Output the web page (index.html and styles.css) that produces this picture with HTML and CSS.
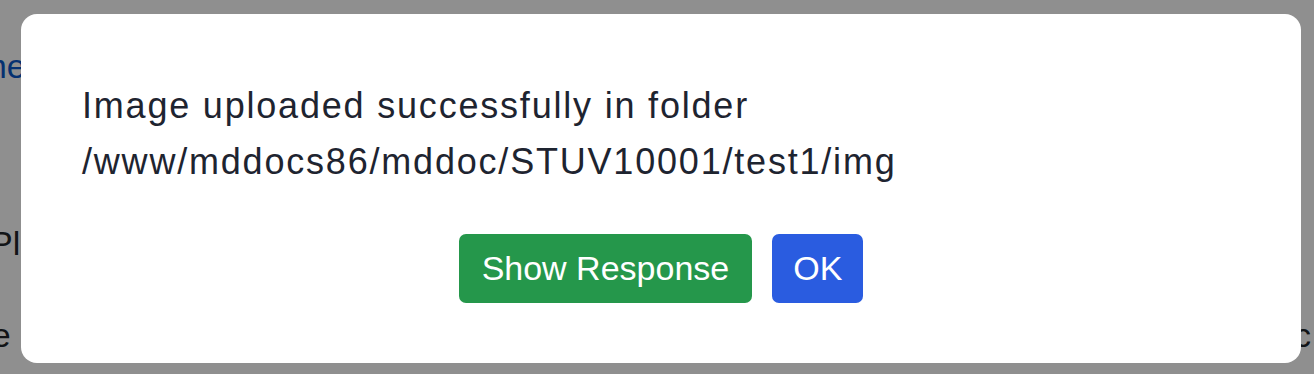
FILE: index.html
```html
<!DOCTYPE html>
<html lang="en">
<head>
    <meta charset="UTF-8">
    <title>Upload Result</title>
    <meta name="viewport" content="width=device-width, initial-scale=1.0">
    <link rel="stylesheet" href="styles.css">
</head>
<body>
<div class="page">
    <div class="page-line page-link">Home</div>
    <div class="page-line page-title">Pl</div>
    <div class="page-row">
        <span class="page-line">Name</span>
        <span class="page-line">Doc</span>
    </div>
</div>

<div class="overlay">
    <div class="modal">
        <p class="modal-text">Image uploaded successfully in folder<br>/www/mddocs86/mddoc/STUV10001/test1/img</p>
        <div class="modal-actions">
            <button class="btn btn-green">Show Response</button>
            <button class="btn btn-blue">OK</button>
        </div>
    </div>
</div>
</body>
</html>
```

FILE: styles.css
```css
body {
    margin: 0;
    background-color: #fff;
    font-family: "Liberation Sans", Arial, sans-serif;
    color: #212529;
    overflow: hidden;
}
.page {
    display: flex;
    flex-direction: column;
    height: 374px;
    font-size: 34px;
}
.page-line {
    line-height: 40px;
}
.page-link {
    color: #0a58ca;
    margin: 46px 0 0 -65px;
}
.page-title {
    margin: 137px 0 0 -10px;
}
.page-row {
    display: flex;
    justify-content: space-between;
    margin: 52px 3px 0 -80px;
}
.overlay {
    position: fixed;
    top: 0;
    left: 0;
    right: 0;
    bottom: 0;
    background: rgba(0, 0, 0, 0.44);
    display: flex;
    padding: 14px 13px 11px 21px;
    box-sizing: border-box;
}
.modal {
    flex: 1;
    background: #fff;
    border-radius: 16px;
    padding: 64px 61px 0;
}
.modal-text {
    margin: 0;
    font-size: 36px;
    letter-spacing: 1.8px;
    line-height: 56px;
    color: #1e2430;
}
.modal-actions {
    display: flex;
    justify-content: center;
    gap: 20px;
    margin-top: 44px;
}
.btn {
    border: none;
    border-radius: 7px;
    color: #fff;
    font-family: "Liberation Sans", Arial, sans-serif;
    font-size: 34px;
    line-height: 69px;
    padding: 0 23px;
    cursor: pointer;
}
.btn-green {
    background-color: #25974b;
}
.btn-blue {
    background-color: #2a5ce0;
    padding: 0 21px;
}
```
